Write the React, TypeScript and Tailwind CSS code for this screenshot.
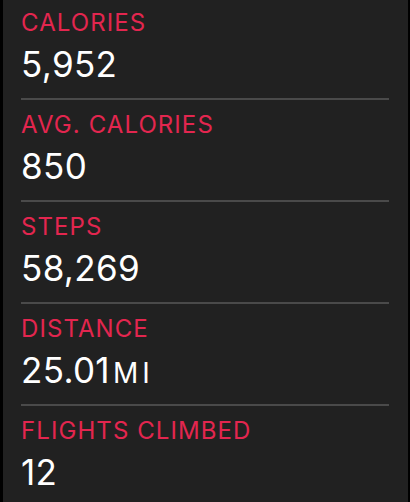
import React from "react";

type Row = { label: string; value: string; unit?: string };

const rows: Row[] = [
  { label: "CALORIES", value: "5,952" },
  { label: "AVG. CALORIES", value: "850" },
  { label: "STEPS", value: "58,269" },
  { label: "DISTANCE", value: "25.01", unit: "MI" },
  { label: "FLIGHTS CLIMBED", value: "12" },
];

export default function App() {
  return (
    <div className="w-[410px] h-[502px] bg-black overflow-hidden" style={{ fontFamily: "Inter, 'Noto Sans', sans-serif" }}>
      <div className="ml-[3px] w-[405px] h-full bg-[#212121] pl-[18px] pr-[19px]">
        {rows.map((r, i) => (
          <div key={r.label} className={i === 0 ? "pt-[8px]" : "pt-[10px]"}>
            <div className="text-[24px] leading-[29px] text-[#e3264f] tracking-[0.045em]">{r.label}</div>
            <div className="mt-[6px] h-[42px] text-[35px] leading-[42px] text-white tracking-[0.01em] whitespace-nowrap">
              {r.value}
              {r.unit && <span className="ml-[3px] text-[28px] leading-[0] tracking-[0.14em]">{r.unit}</span>}
            </div>
            {i < rows.length - 1 && <div className="mt-[13px] h-[2px] bg-[#4a4a4a]" />}
          </div>
        ))}
      </div>
    </div>
  );
}
